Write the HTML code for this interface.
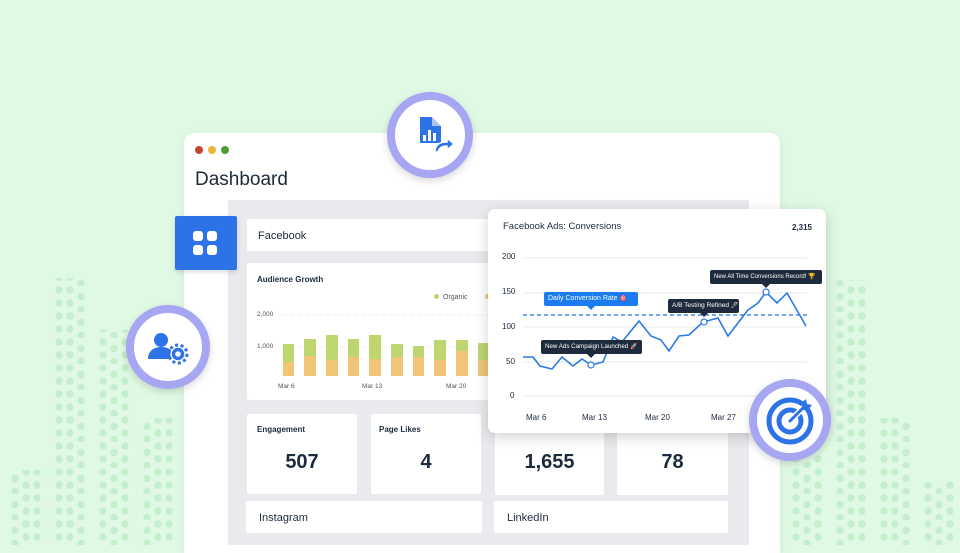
<!DOCTYPE html>
<html><head><meta charset="utf-8"><style>
*{margin:0;padding:0;box-sizing:border-box}
body{width:960px;height:545px;overflow:hidden;background:#dff9e4;font-family:"Liberation Sans",sans-serif;position:relative;color:#1c2a3e}
.abs{position:absolute}
.card{position:absolute;background:#fff;border-radius:2px}
.win{left:184px;top:133px;width:596px;height:420px;background:#fff;border-radius:10px 10px 0 0;box-shadow:0 2px 10px rgba(0,0,0,.06)}
.gray{left:228px;top:200px;width:521px;height:345px;background:#e9eaee}
.lbl{font-size:11px;font-weight:bold;color:#1c2a3e}
.num{font-size:20px;font-weight:bold;text-align:center;width:100%;color:#1c2a3e}
.ring{position:absolute;border-radius:50%;background:#fff;border:8px solid #a6a6f2;box-shadow:0 3px 8px rgba(0,0,0,.15)}
.tip{position:absolute;height:14px;font-size:6.5px;color:#fff;background:#1d2b3d;border-radius:2px;line-height:14px;padding:0 3px 0 4px;white-space:nowrap;overflow:hidden}
.tip i{font-style:normal;font-size:6px}
</style></head><body>
<svg class="abs" style="left:0;top:0" width="960" height="545">
<defs><pattern id="d" width="33" height="26" patternUnits="userSpaceOnUse">
<g fill="#c4efcd"><circle cx="4" cy="4" r="3.7"/><circle cx="4" cy="17" r="3.7"/><circle cx="15" cy="10.5" r="3.7"/><circle cx="15" cy="23.5" r="3.7"/><circle cx="26" cy="4" r="3.7"/><circle cx="26" cy="17" r="3.7"/></g></pattern></defs>
<rect x="8" y="470" width="33" height="75" fill="url(#d)"/>
<rect x="52" y="278" width="33" height="267" fill="url(#d)"/>
<rect x="96" y="330" width="33" height="215" fill="url(#d)"/>
<rect x="140" y="418" width="33" height="127" fill="url(#d)"/>
<rect x="792" y="440" width="33" height="105" fill="url(#d)"/>
<rect x="836" y="280" width="33" height="265" fill="url(#d)"/>
<rect x="879" y="418" width="33" height="127" fill="url(#d)"/>
<rect x="922" y="482" width="33" height="63" fill="url(#d)"/>
</svg>
<div class="abs win"></div>
<div class="abs" style="left:195px;top:146px;width:8px;height:8px;border-radius:50%;background:#c8432f"></div>
<div class="abs" style="left:208px;top:146px;width:8px;height:8px;border-radius:50%;background:#f0b33a"></div>
<div class="abs" style="left:221px;top:146px;width:8px;height:8px;border-radius:50%;background:#4f9c38"></div>
<div class="abs" style="left:195px;top:169px;font-size:19px;color:#1c2a3e">Dashboard</div>
<div class="abs gray"></div>
<div class="card" style="left:247px;top:219px;width:250px;height:32px"><span class="abs" style="left:11px;top:11px;font-size:11px">Facebook</span></div>
<div class="card" style="left:247px;top:263px;width:250px;height:137px">
<span class="abs" style="left:10px;top:12px;font-size:8px;font-weight:bold">Audience Growth</span>
<span class="abs" style="left:187px;top:31px;font-size:7px;color:#555"><span style="display:inline-block;width:5px;height:5px;border-radius:50%;background:#b8d36d;margin-right:4px"></span>Organic</span>
<span class="abs" style="left:238px;top:31px;width:5px;height:5px;border-radius:50%;background:#f0c477"></span>
<span class="abs" style="left:10px;top:48px;font-size:6.5px;color:#555">2,000</span>
<span class="abs" style="left:10px;top:80px;font-size:6.5px;color:#555">1,000</span>
<span class="abs" style="left:31px;top:120px;font-size:6.5px;color:#555">Mar 6</span>
<span class="abs" style="left:115px;top:120px;font-size:6.5px;color:#555">Mar 13</span>
<span class="abs" style="left:199px;top:120px;font-size:6.5px;color:#555">Mar 20</span>
<svg class="abs" style="left:0;top:0" width="250" height="137">
<line x1="30" y1="52" x2="250" y2="52" stroke="#eee" stroke-dasharray="4 3"/><line x1="30" y1="84" x2="250" y2="84" stroke="#eee" stroke-dasharray="4 3"/>
<g fill="#bed670"><rect x="36" y="81" width="11" height="18"/><rect x="57" y="76" width="12" height="17"/><rect x="79" y="72" width="12" height="25"/><rect x="101" y="76" width="11" height="18"/><rect x="122" y="72" width="12" height="24"/><rect x="144" y="81" width="12" height="13"/><rect x="166" y="83" width="11" height="11"/><rect x="187" y="77" width="12" height="20"/><rect x="209" y="77" width="12" height="11"/><rect x="231" y="80" width="12" height="17"/></g>
<g fill="#f1c578"><rect x="36" y="99" width="11" height="14"/><rect x="57" y="93" width="12" height="20"/><rect x="79" y="97" width="12" height="16"/><rect x="101" y="94" width="11" height="19"/><rect x="122" y="96" width="12" height="17"/><rect x="144" y="94" width="12" height="19"/><rect x="166" y="94" width="11" height="19"/><rect x="187" y="97" width="12" height="16"/><rect x="209" y="88" width="12" height="25"/><rect x="231" y="97" width="12" height="16"/></g>
</svg></div>
<div class="card" style="left:247px;top:414px;width:110px;height:80px"><span class="abs lbl" style="left:10px;top:11px;font-size:8px">Engagement</span><div class="abs num" style="top:37px">507</div></div>
<div class="card" style="left:371px;top:414px;width:110px;height:80px"><span class="abs lbl" style="left:8px;top:11px;font-size:8px">Page Likes</span><div class="abs num" style="top:37px">4</div></div>
<div class="card" style="left:495px;top:414px;width:109px;height:81px"><div class="abs num" style="top:37px">1,655</div></div>
<div class="card" style="left:617px;top:414px;width:111px;height:81px"><div class="abs num" style="top:37px">78</div></div>
<div class="card" style="left:246px;top:501px;width:236px;height:32px"><span class="abs" style="left:13px;top:11px;font-size:11px">Instagram</span></div>
<div class="card" style="left:494px;top:501px;width:234px;height:32px"><span class="abs" style="left:13px;top:11px;font-size:11px">LinkedIn</span></div>

<div class="abs" style="left:488px;top:209px;width:338px;height:224px;background:#fff;border-radius:7px;box-shadow:0 4px 14px rgba(0,0,0,.18)">
<span class="abs" style="left:15px;top:12px;font-size:9.5px">Facebook Ads: Conversions</span>
<span class="abs" style="right:14px;top:14px;font-size:8px;font-weight:bold">2,315</span>
<span class="abs" style="left:14px;top:43px;font-size:8px">200</span>
<span class="abs" style="left:14px;top:78px;font-size:8px">150</span>
<span class="abs" style="left:14px;top:113px;font-size:8px">100</span>
<span class="abs" style="left:18px;top:148px;font-size:8px">50</span>
<span class="abs" style="left:22px;top:182px;font-size:8px">0</span>
<span class="abs" style="left:38px;top:204px;font-size:8px">Mar 6</span>
<span class="abs" style="left:94px;top:204px;font-size:8px">Mar 13</span>
<span class="abs" style="left:157px;top:204px;font-size:8px">Mar 20</span>
<span class="abs" style="left:223px;top:204px;font-size:8px">Mar 27</span>
</div>
<svg class="abs" style="left:0;top:0;pointer-events:none" width="960" height="545">
<g stroke="#e6e8ec"><line x1="523" y1="258" x2="807" y2="258"/><line x1="523" y1="293" x2="807" y2="293"/><line x1="523" y1="327" x2="807" y2="327"/><line x1="523" y1="362" x2="807" y2="362"/><line x1="523" y1="396" x2="807" y2="396"/></g>
<line x1="523" y1="315" x2="807" y2="315" stroke="#1f6fe0" stroke-width="1.2" stroke-dasharray="4 3"/>
<polyline fill="none" stroke="#2a7be4" stroke-width="1.6" points="523,357 533,357 540,366 552,369 562,357 573,366 582,359 591,365 603,362 613,337 622,342 639,321 651,336 661,340 669,351 679,336 689,335 703,322 718,318 728,336 748,310 758,303 766,292 777,303 787,293 806,326"/>
<g fill="#fff" stroke="#2a7be4" stroke-width="1.2"><circle cx="591" cy="365" r="3"/><circle cx="704" cy="322" r="3"/><circle cx="766" cy="292" r="3"/></g>
<g fill="#1d2b3d"><path d="M587 354h8l-4 4z"/><path d="M700 313h8l-4 4z"/><path d="M762 284h8l-4 4z"/></g><path d="M587 306h8l-4 4z" fill="#1a7cf0"/>
</svg>
<div class="tip" style="left:544px;top:292px;width:94px;background:#1a7cf0;font-size:7px">Daily Conversion Rate <i>🎯</i></div>
<div class="tip" style="left:668px;top:299px;width:71px">A/B Testing Refined <i>🖊</i></div>
<div class="tip" style="left:710px;top:270px;width:112px;font-size:6px">New All Time Conversions Record! <i>🏆</i></div>
<div class="tip" style="left:541px;top:340px;width:101px;font-size:6.2px">New Ads Campaign Launched <i>🚀</i></div>

<div class="abs" style="left:175px;top:216px;width:62px;height:54px;background:#2d72e6;border-radius:2px;box-shadow:0 2px 5px rgba(0,0,0,.15)">
<svg width="62" height="54"><g fill="#fff"><rect x="18" y="15" width="10" height="10" rx="3"/><rect x="32" y="15" width="10" height="10" rx="3"/><rect x="18" y="29" width="10" height="10" rx="3"/><rect x="32" y="29" width="10" height="10" rx="3"/></g></svg></div>

<div class="ring" style="left:387px;top:92px;width:86px;height:86px">
<svg width="70" height="70"><path d="M25 17h12l9 9v17h-21z" fill="#2d72e6"/><path d="M37 17v9h9" fill="#fff" opacity=".6"/><g fill="#fff"><rect x="28" y="35" width="3" height="6"/><rect x="33" y="30" width="3" height="11"/><rect x="38" y="33" width="3" height="8"/></g><path d="M40 52c0-7 4-10 12-10v-4l7 6-7 6v-4c-5 0-8 2-9 6z" fill="#2d72e6" stroke="#fff" stroke-width="1.5"/></svg></div>
<div class="ring" style="left:126px;top:305px;width:84px;height:84px">
<svg width="68" height="68"><circle cx="27" cy="27" r="7" fill="#2d72e6"/><path d="M14 46c0-8 6-12 13-12s11 3 12 6v6z" fill="#2d72e6"/><circle cx="44" cy="41" r="7" fill="#2d72e6" stroke="#fff" stroke-width="1.5"/><circle cx="44" cy="41" r="9" fill="none" stroke="#2d72e6" stroke-width="3" stroke-dasharray="3 2.6"/><circle cx="44" cy="41" r="2.8" fill="#fff"/></svg></div>
<div class="ring" style="left:749px;top:379px;width:82px;height:82px">
<svg width="66" height="66"><circle cx="33" cy="34" r="21" fill="none" stroke="#2d72e6" stroke-width="5"/><circle cx="33" cy="34" r="11" fill="none" stroke="#2d72e6" stroke-width="5"/><line x1="33" y1="34" x2="47" y2="20" stroke="#fff" stroke-width="6"/><line x1="33" y1="34" x2="47" y2="20" stroke="#2d72e6" stroke-width="3" stroke-linecap="round"/><path d="M44 16l5-4 1 5 5 1-4 5-5 0z" fill="#2d72e6"/></svg></div>
</body></html>
